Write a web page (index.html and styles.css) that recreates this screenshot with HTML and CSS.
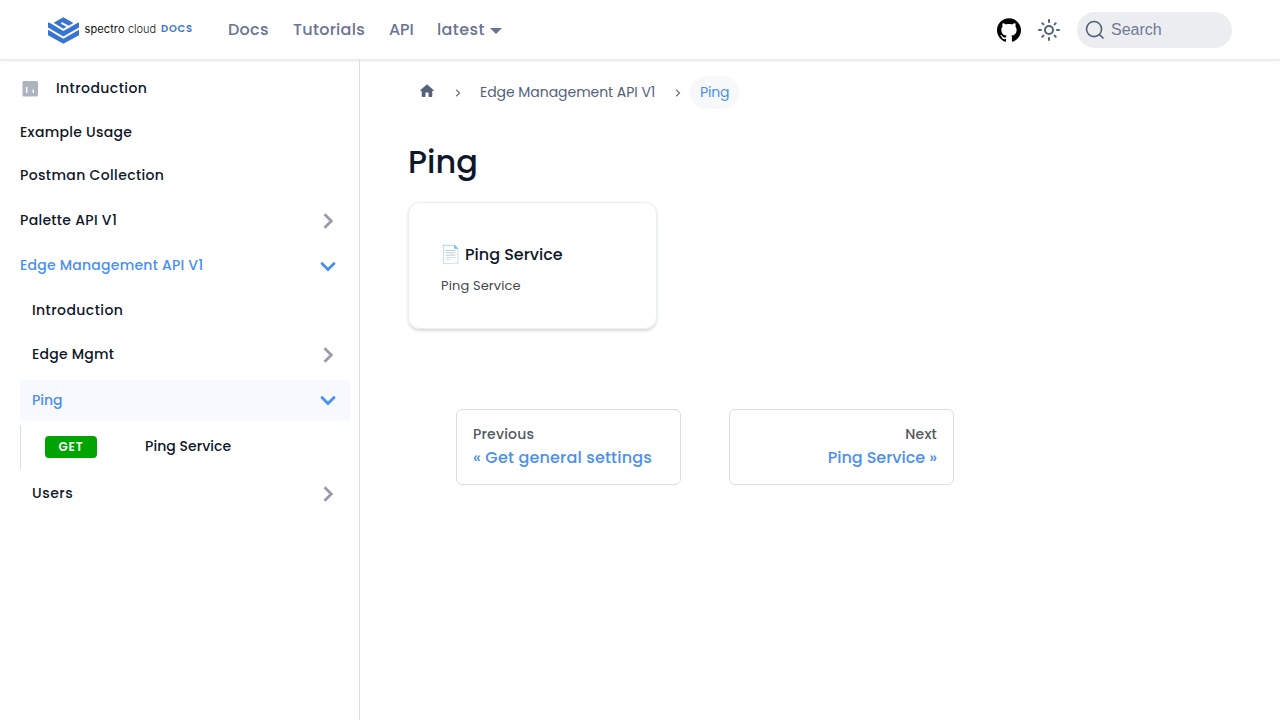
FILE: index.html
```html
<!DOCTYPE html>
<html lang="en">
<head>
<meta charset="utf-8">
<title>Ping | Spectro Cloud Docs</title>
<link rel="stylesheet" href="styles.css">
</head>
<body>
<header class="navbar">
  <a class="logo">
    <svg class="logo-mark" viewBox="0 0 93 80"><path fill="#3875d3" d="M46 0 79 19 93 16V54L46 80 0 54V16L13 19Z"/><path fill="none" stroke="#fff" stroke-width="6" d="M-2 33 46 61 95 33M8 15 46 38 62 29 40 17M62 29 88 14"/></svg>
    <span class="logo-a">spectro</span><span class="logo-b">cloud</span><span class="logo-c">DOCS</span>
  </a>
  <nav class="nav-links">
    <a class="t-docs">Docs</a><a class="t-tut">Tutorials</a><a class="t-api">API</a><a class="t-latest">latest</a><i class="caret"></i>
  </nav>
  <div class="nav-right">
    <svg class="github" viewBox="0 0 24 24"><path d="M12 .297c-6.63 0-12 5.373-12 12 0 5.303 3.438 9.8 8.205 11.385.6.113.82-.258.82-.577 0-.285-.01-1.04-.015-2.04-3.338.724-4.042-1.61-4.042-1.61C4.422 18.07 3.633 17.7 3.633 17.7c-1.087-.744.084-.729.084-.729 1.205.084 1.838 1.236 1.838 1.236 1.07 1.835 2.809 1.305 3.495.998.108-.776.417-1.305.76-1.605-2.665-.3-5.466-1.332-5.466-5.93 0-1.31.465-2.38 1.235-3.22-.135-.303-.54-1.523.105-3.176 0 0 1.005-.322 3.3 1.23.96-.267 1.98-.399 3-.405 1.02.006 2.04.138 3 .405 2.28-1.552 3.285-1.23 3.285-1.23.645 1.653.24 2.873.12 3.176.765.84 1.23 1.91 1.23 3.22 0 4.61-2.805 5.625-5.475 5.92.42.36.81 1.096.81 2.22 0 1.606-.015 2.896-.015 3.286 0 .315.21.69.825.57C20.565 22.092 24 17.592 24 12.297c0-6.627-5.373-12-12-12"/></svg>
    <svg class="sun" viewBox="0 0 24 24"><circle cx="12" cy="12" r="4"/><path d="M12 2v2M12 20v2M2 12h2M20 12h2M5.3 5.3l1.1 1.1M17.6 17.6l1.1 1.1M5.3 18.7l1.1-1.1M17.6 6.4l1.1-1.1"/></svg>
    <div class="search">
      <svg class="search-icon" viewBox="0 0 20 20"><path d="M14.386 14.386l4.0877 4.0877-4.0877-4.0877c-2.9418 2.9419-7.7115 2.9419-10.6533 0-2.9419-2.9418-2.9419-7.7115 0-10.6533 2.9418-2.9419 7.7115-2.9419 10.6533 0 2.9419 2.9418 2.9419 7.7115 0 10.6533z"/></svg>
      <span>Search</span>
    </div>
  </div>
</header>
<div class="layout">
  <aside class="sidebar">
    <a class="row h40"><svg class="intro-icon" viewBox="0 0 18 18"><rect x="1.500" y="1" width="15.500" height="15.500" rx="1.500" fill="#adb2c0"/><path d="M5.700 7v6M12.300 9.500V13" stroke="#fff" stroke-width="1.500"/></svg><span class="t-intro">Introduction</span></a>
    <a class="row h40"><span class="t-example">Example Usage</span></a>
    <a class="row h39"><span class="t-postman">Postman Collection</span></a>
    <a class="row h41 after-postman"><span class="t-palette">Palette API V1</span><svg class="chev" viewBox="0 0 18 18"><path d="M5.5 2.2 12.3 9 5.5 15.8"/></svg></a>
    <a class="row h41 blue"><span class="t-edge">Edge Management API V1</span><svg class="chev" viewBox="0 0 18 18"><path d="M2.2 5.7 9 12.5 15.8 5.7"/></svg></a>
    <a class="row h40 sub"><span class="t-intro">Introduction</span></a>
    <a class="row h41 sub gap-after"><span class="t-mgmt">Edge Mgmt</span><svg class="chev" viewBox="0 0 18 18"><path d="M5.5 2.2 12.3 9 5.5 15.8"/></svg></a>
    <a class="row h41 sub blue active"><span class="t-ping">Ping</span><svg class="chev" viewBox="0 0 18 18"><path d="M2.2 5.7 9 12.5 15.8 5.7"/></svg></a>
    <a class="row leaf"><b class="get">GET</b><span class="t-service">Ping Service</span></a>
    <a class="row h41 sub"><span class="t-users">Users</span><svg class="chev" viewBox="0 0 18 18"><path d="M5.5 2.2 12.3 9 5.5 15.8"/></svg></a>
  </aside>
  <main class="content">
    <nav class="crumbs">
      <svg class="home" viewBox="0 0 24 24"><path d="M10 19v-5h4v5c0 .55.45 1 1 1h3c.55 0 1-.45 1-1v-7h1.700c.46 0 .68-.57.33-.87L12.670 3.600c-.38-.34-.96-.34-1.340 0l-8.360 7.530c-.34.3-.13.870.33.870H5v7c0 .55.45 1 1 1h3c.55 0 1-.45 1-1z"/></svg>
      <svg class="sep sep-a" viewBox="0 0 6 8"><path d="M1.2.8 4.5 4 1.2 7.200"/></svg>
      <a class="t-crumb">Edge Management API V1</a>
      <svg class="sep sep-b" viewBox="0 0 6 8"><path d="M1.2.8 4.5 4 1.2 7.200"/></svg>
      <span class="pill">Ping</span>
    </nav>
    <h1>Ping</h1>
    <a class="card">
      <h2><span class="emoji">📄</span><span>Ping Service</span></h2>
      <p>Ping Service</p>
    </a>
    <nav class="pager">
      <a class="page"><small>Previous</small><span class="t-get">« Get general settings</span></a>
      <a class="page next"><small>Next</small><span class="t-nextlabel">Ping Service »</span></a>
    </nav>
  </main>
</div>
</body>
</html>
```
FILE: styles.css
```css
* { box-sizing: border-box; }
body { margin: 0; height: 720px; overflow: hidden; background: #fff; color: #0f172a; font-family: Poppins, Inter, sans-serif; font-weight: 500; font-size: 14px; display: flex; flex-direction: column; }
.navbar { height: 60px; flex: none; display: flex; align-items: center; padding: 0 48px; box-shadow: 0 1px 2px rgba(0,0,0,.1); border-bottom: 1px solid #e8e8e8; }
.logo { width: 180px; flex: none; display: flex; align-items: center; font-size: 11px; color: #111; white-space: nowrap; }
.logo-mark { width: 31px; height: 27px; margin: 1px 5.500px 0 0; }
.logo-a, .logo-b { font-family: Inter, sans-serif; font-weight: 400; width: 41px; margin-top: -2px; letter-spacing: .1px; }
.logo-b { font-weight: 300; margin-left: 2.500px; width: 33px; }
.logo-b { letter-spacing: -.05px; }
.logo-c { color: #3875d3; font-weight: 600; font-size: 10px; letter-spacing: .8px; margin-top: -1px; }
.nav-links { display: flex; align-items: center; font-size: 16px; color: #6b7394; }
.t-docs { width: 65px; letter-spacing: .25px; }
.t-tut { width: 96px; letter-spacing: .28px; }
.t-api { width: 48px; letter-spacing: -.1px; }
.t-latest { width: 53px; letter-spacing: .4px; }
.caret { border: 6.4px solid transparent; border-top-color: #6b7394; border-bottom: 0; margin-top: 3px; }
.nav-right { margin-left: auto; display: flex; align-items: center; }
.github { width: 24px; height: 24px; margin-right: 16px; }
.sun { width: 24px; height: 24px; margin-right: 16px; fill: none; stroke: #53627a; stroke-width: 2; stroke-linecap: round; }
.search { width: 155px; height: 36px; border-radius: 18px; background: #ebedf0; display: flex; align-items: center; padding-left: 8px; font: 400 16px "Liberation Sans", sans-serif; color: #717a99; }
.search-icon { width: 20px; height: 20px; margin-right: 6px; fill: none; stroke: #53627a; stroke-width: 1.6; }
.layout { flex: 1; display: flex; }
.sidebar { width: 360px; flex: none; border-right: 1px solid #dadde1; padding: 8px 9px 0 20px; display: flex; flex-direction: column; gap: 4px; }
.row { display: flex; align-items: center; white-space: nowrap; border-radius: 4px; }
.h39 { height: 39px; }
.h40 { height: 40px; }
.h41 { height: 41px; }
.after-postman { margin-top: 1px; }
.gap-after { margin-bottom: 1px; }
.sub { padding-left: 12px; }
.blue { color: #4a90f0; }
.active { background: #f7f9ff; }
.chev { width: 18px; height: 18px; margin: 1px 13px 0 auto; fill: none; stroke: #9899ab; stroke-width: 2.700; }
.blue .chev { stroke: #4a90f0; }
.active .chev { margin-top: -1px; }
.intro-icon { width: 18px; height: 18px; margin: 2px 17px 0 1px; }
.t-intro { letter-spacing: .42px; }
.t-example { letter-spacing: .28px; }
.t-postman { letter-spacing: .36px; }
.t-palette { letter-spacing: .3px; }
.t-edge { letter-spacing: .23px; }
.t-mgmt { letter-spacing: .22px; }
.t-service { letter-spacing: .06px; margin-top: -2px; }
.t-users { letter-spacing: .5px; }
.leaf { height: 44px; border-left: 1px solid #dadde1; border-radius: 0; padding-left: 24px; }
.get { width: 52px; height: 22px; margin-right: 48px; border-radius: 4px; background: #00a400; color: #fff; font-size: 12px; font-weight: 600; display: flex; align-items: center; justify-content: center; letter-spacing: .8px; }
.content { padding: 16px 0 0 48px; }
.crumbs { height: 33px; display: flex; align-items: center; color: #53627a; font-weight: 400; }
.home { width: 18px; height: 18px; margin: -3px 0 0 10px; fill: #53627a; }
.sep { width: 6px; height: 8px; fill: none; stroke: #777; stroke-width: 1.300; }
.sep-a { margin: 1px 19px 0 19px; }
.t-crumb { width: 179px; letter-spacing: -.04px; }
.sep-b { margin: 1px 9px 0 16px; }
.pill { width: 49px; height: 33px; border-radius: 17px; background: #f7f8fa; color: #4a90f0; display: flex; align-items: center; padding-left: 10px; letter-spacing: -.2px; }
h1 { margin: 29px 0 0; height: 48px; line-height: 47px; font-size: 32px; font-weight: 500; }
.card { display: block; width: 249px; height: 127px; margin-top: 16px; border: 1px solid #ebedf0; border-radius: 12px; padding: 37px 32px 0; box-shadow: 0 1.500px 3px rgba(0,0,0,.15); }
h2 { margin: 0; height: 28px; display: flex; align-items: center; font-size: 16px; font-weight: 500; }
.emoji { width: 25px; margin-left: -1px; font-size: 17px; }
.card p { margin: 8px 0 0; font-size: 13px; line-height: 20px; font-weight: 400; color: #444950; letter-spacing: .12px; }
.pager { display: flex; gap: 48px; margin: 80px 0 0 48px; }
.page { width: 225px; height: 76px; border: 1px solid #dadde1; border-radius: 6px; padding: 15px 16px; display: flex; flex-direction: column; color: #4a90f0; font-size: 16px; line-height: 24px; white-space: nowrap; }
.page small { font-size: 14px; line-height: 19px; color: #525860; margin-bottom: 2px; letter-spacing: .2px; }
.t-get { letter-spacing: .18px; }
.t-nextlabel { letter-spacing: -.03px; }
.next { align-items: flex-end; }
```
